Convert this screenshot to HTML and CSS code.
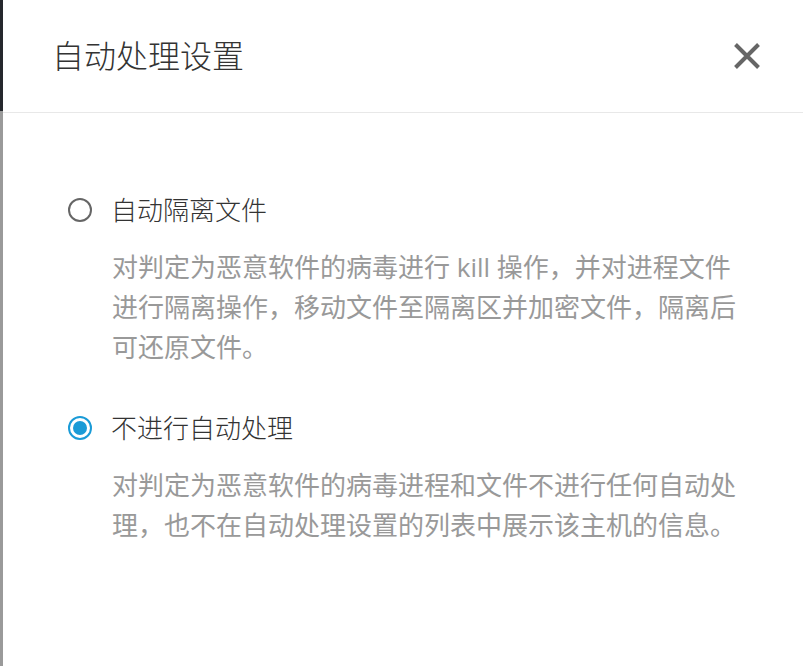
FILE: index.html
```html
<!DOCTYPE html>
<html lang="zh-CN">
<head>
<meta charset="utf-8">
<title>自动处理设置</title>
<link rel="stylesheet" href="styles.css">
</head>
<body>
<div class="page">
  <div class="edge"><div class="edge-top"></div><div class="edge-bottom"></div></div>
  <div class="drawer">
    <header class="head">
      <h1 class="title">自动处理设置</h1>
      <button class="close" aria-label="关闭">
        <svg width="28" height="28" viewBox="0 0 28 28"><path d="M2.5 2.5 L25.5 25.5 M25.5 2.5 L2.5 25.5" stroke="#666" stroke-width="4" stroke-linecap="butt" fill="none"/></svg>
      </button>
    </header>
    <div class="body">
      <div class="option">
        <div class="row"><span class="radio"></span><span class="label">自动隔离文件</span></div>
        <p class="desc">对判定为恶意软件的病毒进行 kill 操作，并对进程文件进行隔离操作，移动文件至隔离区并加密文件，隔离后可还原文件。</p>
      </div>
      <div class="option">
        <div class="row"><span class="radio checked"></span><span class="label">不进行自动处理</span></div>
        <p class="desc">对判定为恶意软件的病毒进程和文件不进行任何自动处理，也不在自动处理设置的列表中展示该主机的信息。</p>
      </div>
    </div>
  </div>
</div>
</body>
</html>
```
FILE: styles.css
```css
html, body {
  margin: 0;
  padding: 0;
  background: #fff;
}
body {
  font-family: "Open Sans", "Noto Sans CJK SC", sans-serif;
}
.page {
  display: flex;
  height: 666px;
}
.edge {
  width: 3px;
  display: flex;
  flex-direction: column;
}
.edge-top {
  height: 111px;
  background: #25282d;
}
.edge-bottom {
  flex: 1;
  background: #9a9a9a;
}
.drawer {
  flex: 1;
}
.head {
  height: 112px;
  border-bottom: 1px solid #e8e8e8;
  display: flex;
  align-items: center;
  justify-content: space-between;
  padding: 0 42px 0 49px;
}
.title {
  margin: 0;
  font-size: 32px;
  font-weight: 300;
  line-height: 40px;
  color: #333;
}
.close {
  border: 0;
  background: none;
  padding: 0;
  width: 28px;
  height: 28px;
  display: flex;
}
.body {
  padding: 77px 0 0 65px;
}
.option + .option {
  margin-top: 41px;
}
.row {
  display: flex;
  align-items: center;
  height: 40px;
}
.radio {
  width: 24px;
  height: 24px;
  box-sizing: border-box;
  border: 2px solid #666;
  border-radius: 50%;
  margin-right: 19px;
  display: flex;
  align-items: center;
  justify-content: center;
}
.radio.checked {
  border-color: #1a9bd7;
}
.radio.checked::after {
  content: "";
  width: 14px;
  height: 14px;
  border-radius: 50%;
  background: #1a9bd7;
}
.label {
  font-size: 26px;
  font-weight: 300;
  line-height: 40px;
  color: #333;
}
.desc {
  margin: 17px 0 0 44px;
  width: 630px;
  font-size: 26px;
  line-height: 40px;
  color: #999;
}
```
